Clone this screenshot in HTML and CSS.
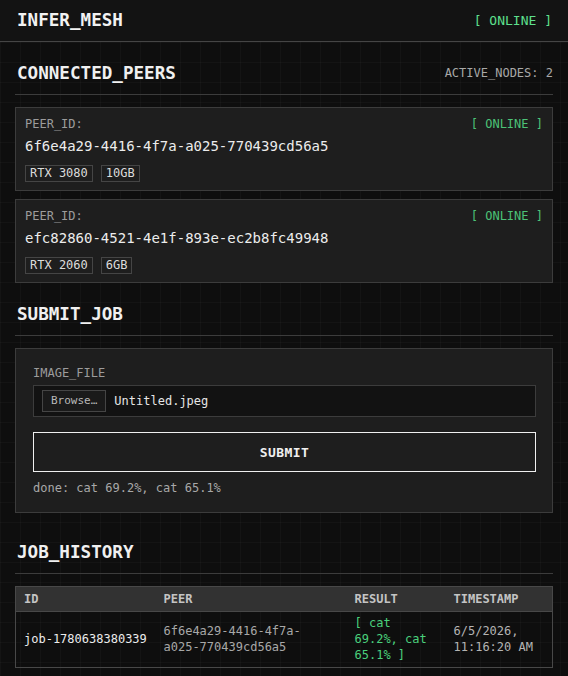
FILE: index.html
```html
<!DOCTYPE html>
<html lang="en">
<head>
    <meta charset="UTF-8">
    <meta name="viewport" content="width=device-width, initial-scale=1.0">
    <title>INFER_MESH</title>
    <link rel="stylesheet" href="styles.css">
</head>
<body>
    <header class="topbar">
        <h1>INFER_MESH</h1>
        <span class="status">[ ONLINE ]</span>
    </header>
    <main class="main">
        <section class="section">
            <div class="section-head">
                <h2>CONNECTED_PEERS</h2>
                <span class="meta">ACTIVE_NODES: 2</span>
            </div>
            <div class="peers">
                <div class="card peer">
                    <div class="peer-top">
                        <span class="label">PEER_ID:</span>
                        <span class="peer-status">[ ONLINE ]</span>
                    </div>
                    <div class="peer-id">6f6e4a29-4416-4f7a-a025-770439cd56a5</div>
                    <div class="tags">
                        <span class="tag">RTX 3080</span>
                        <span class="tag">10GB</span>
                    </div>
                </div>
                <div class="card peer">
                    <div class="peer-top">
                        <span class="label">PEER_ID:</span>
                        <span class="peer-status">[ ONLINE ]</span>
                    </div>
                    <div class="peer-id">efc82860-4521-4e1f-893e-ec2b8fc49948</div>
                    <div class="tags">
                        <span class="tag">RTX 2060</span>
                        <span class="tag">6GB</span>
                    </div>
                </div>
            </div>
        </section>

        <section class="section section-submit">
            <div class="section-head">
                <h2>SUBMIT_JOB</h2>
            </div>
            <form class="card job-form" onsubmit="return false">
                <label class="label" for="image-file">IMAGE_FILE</label>
                <div class="file-box">
                    <span class="browse">Browse…</span>
                    <span class="file-name">Untitled.jpeg</span>
                </div>
                <button class="submit" type="submit">SUBMIT</button>
                <p class="job-status">done: cat 69.2%, cat 65.1%</p>
            </form>
        </section>

        <section class="section">
            <div class="section-head">
                <h2>JOB_HISTORY</h2>
            </div>
            <table class="history">
                <colgroup>
                    <col class="col-id">
                    <col class="col-peer">
                    <col class="col-result">
                    <col class="col-time">
                </colgroup>
                <thead>
                    <tr>
                        <th>ID</th>
                        <th>PEER</th>
                        <th>RESULT</th>
                        <th>TIMESTAMP</th>
                    </tr>
                </thead>
                <tbody>
                    <tr>
                        <td class="job-id">job-1780638380339</td>
                        <td class="job-peer">6f6e4a29-4416-4f7a-a025-770439cd56a5</td>
                        <td class="job-result">[ cat 69.2%, cat 65.1% ]</td>
                        <td class="job-time">6/5/2026, 11:16:20 AM</td>
                    </tr>
                </tbody>
            </table>
        </section>
    </main>
</body>
</html>
```

FILE: styles.css
```css
* {
    box-sizing: border-box;
}
body {
    margin: 0;
    font-family: "DejaVu Sans Mono", "Liberation Mono", monospace;
    color: #e6e6e6;
    background-color: #0e0e0e;
}
h1, h2, p {
    margin: 0;
}
.topbar {
    display: flex;
    justify-content: space-between;
    align-items: center;
    height: 42px;
    padding: 0 16px 1px 17px;
    background: #131313;
    border-bottom: 1px solid #454545;
}
.topbar h1 {
    font-size: 17.6px;
    font-weight: bold;
    color: #f2f2f2;
}
.status {
    font-size: 13px;
    color: #5ee08e;
}
.main {
    padding: 20px 15px 20px;
    background-color: #0e0e0e;
    background-image:
        linear-gradient(rgba(255, 255, 255, 0.025) 1px, transparent 1px),
        linear-gradient(90deg, rgba(255, 255, 255, 0.025) 1px, transparent 1px);
    background-size: 20px 20px;
    background-position: 0 0;
    min-height: 640px;
}
.section {
    margin-bottom: 20px;
}
.section-submit {
    margin-bottom: 28px;
}
.section-head {
    display: flex;
    justify-content: space-between;
    align-items: center;
    padding-bottom: 10px;
    border-bottom: 1px solid #3c3c3c;
    margin-bottom: 12px;
}
.section-head h2 {
    padding-left: 2px;
    font-size: 17.6px;
    line-height: 22px;
    font-weight: bold;
    color: #f0f0f0;
}
.meta {
    font-size: 12px;
    color: #a8a8a8;
}
.card {
    background: #1e1e1e;
    border: 1px solid #3c3c3c;
}
.peers {
    display: flex;
    flex-direction: column;
    gap: 8px;
}
.peer {
    padding: 8px 9px;
}
.peer-top {
    display: flex;
    justify-content: space-between;
    line-height: 16px;
}
.label {
    font-size: 12px;
    color: #9c9c9c;
}
.peer-status {
    font-size: 12px;
    color: #4cc277;
}
.peer-id {
    margin-top: 4px;
    font-size: 14px;
    line-height: 20px;
    color: #ececec;
}
.tags {
    display: flex;
    gap: 8px;
    margin-top: 9px;
}
.tag {
    font-size: 12px;
    line-height: 15px;
    padding: 0 4px;
    border: 1px solid #454545;
    color: #dcdcdc;
}
.job-form {
    display: flex;
    flex-direction: column;
    padding: 16px 16px 16px 17px;
}
.job-form .label {
    line-height: 16px;
}
.file-box {
    display: flex;
    align-items: center;
    gap: 8px;
    margin-top: 4px;
    padding: 4px 8px;
    background: #121212;
    border: 1px solid #3c3c3c;
}
.browse {
    font-size: 11px;
    line-height: 20px;
    padding: 0 8px;
    border: 1px solid #454545;
    color: #b8b8b8;
    background: #1a1a1a;
}
.file-name {
    font-size: 12px;
    color: #e6e6e6;
}
.submit {
    margin-top: 15px;
    height: 40px;
    font-family: inherit;
    font-size: 13px;
    font-weight: bold;
    letter-spacing: 0.4px;
    color: #f0f0f0;
    background: transparent;
    border: 1px solid #f0f0f0;
    cursor: pointer;
}
.job-status {
    margin-top: 8px;
    font-size: 12px;
    line-height: 16px;
    color: #a8a8a8;
}
.history {
    width: 100%;
    table-layout: fixed;
    border-collapse: collapse;
    border: 1px solid #484848;
    font-size: 12px;
    line-height: 16px;
}
.col-id { width: 140px; }
.col-peer { width: 191px; }
.col-result { width: 99px; }
.history th {
    text-align: left;
    padding: 4px 8px;
    color: #c4c4c4;
    background: #323232;
    border-bottom: 1px solid #484848;
}
.history td {
    padding: 3px 8px 4px;
    vertical-align: middle;
}
.job-id {
    color: #ececec;
    white-space: nowrap;
}
.history .job-peer {
    padding-right: 12px;
    color: #a8a8a8;
}
.job-result {
    color: #4ad07c;
}
.job-time {
    color: #b4b4b4;
}
```
